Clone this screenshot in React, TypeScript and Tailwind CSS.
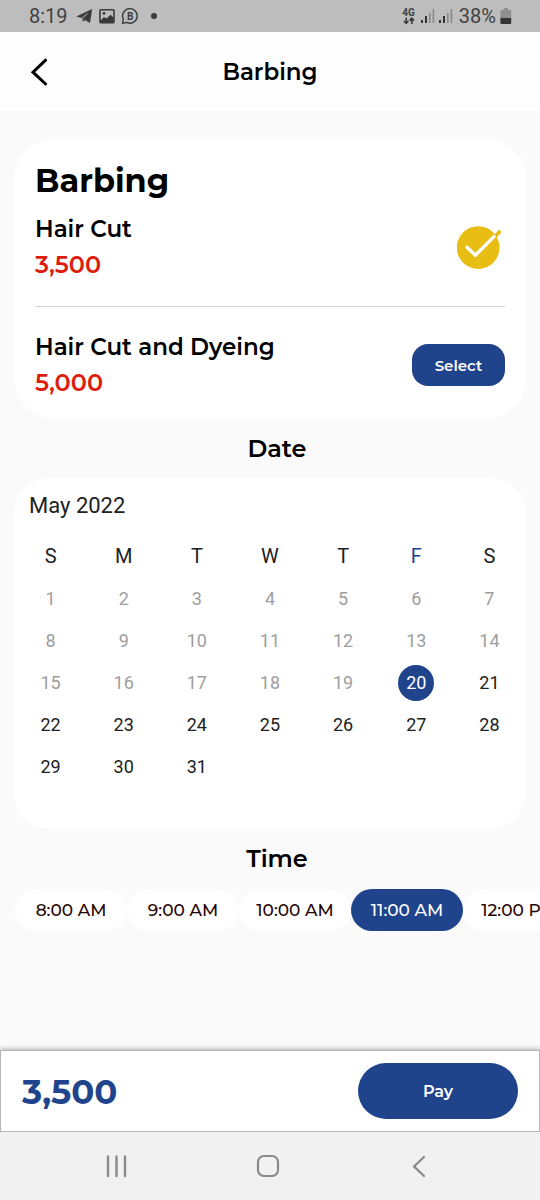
import React, { useState } from 'react';

const services = [
  { name: 'Hair Cut', price: '3,500' },
  { name: 'Hair Cut and Dyeing', price: '5,000' },
];

const weekdays = ['S', 'M', 'T', 'W', 'T', 'F', 'S'];

const weeks = [
  [1, 2, 3, 4, 5, 6, 7],
  [8, 9, 10, 11, 12, 13, 14],
  [15, 16, 17, 18, 19, 20, 21],
  [22, 23, 24, 25, 26, 27, 28],
  [29, 30, 31, null, null, null, null],
];

const TODAY = 20;

const times = ['8:00 AM', '9:00 AM', '10:00 AM', '11:00 AM', '12:00 PM'];

const SignalIcon: React.FC = () => (
  <svg width="14" height="16" viewBox="0 0 14 16" aria-hidden="true">
    <rect x="0" y="12" width="2" height="3" fill="#333" />
    <rect x="4" y="8" width="2" height="7" fill="#333" />
    <rect x="8" y="5" width="1.6" height="10" fill="#888" />
    <rect x="11.6" y="1" width="1.6" height="14" fill="#888" />
  </svg>
);

const StatusBar: React.FC = () => (
  <div className="flex h-8 shrink-0 items-center justify-between bg-[#bdbdbd] pr-7 pl-[29px] font-['Roboto',sans-serif] text-xl text-[#424242]">
    <div className="flex items-center gap-1.5">
      <span className="mr-0.5">8:19</span>
      <svg width="17" height="16" viewBox="0 0 17 16" aria-hidden="true">
        <path d="M0.2 8.4 16.2 1 14 15 9 12 7 13.8 6 10Z" fill="#3a3a3a" />
        <path d="M5.6 9.8 11.4 5.6 7.2 10.2 6.8 12" fill="none" stroke="#bdbdbd" strokeWidth="0.6" />
      </svg>
      <svg width="16" height="16" viewBox="0 0 16 16" aria-hidden="true">
        <rect x="1" y="1.8" width="14" height="13" rx="0.8" fill="none" stroke="#3a3a3a" strokeWidth="1.6" />
        <path d="M1.5 12.5 5 9 7.4 10.6 11.6 6.8 14.5 9.6V14.5H1.5Z" fill="#3a3a3a" />
        <circle cx="5" cy="5.4" r="1.4" fill="#3a3a3a" />
      </svg>
      <svg width="18" height="18" viewBox="0 0 18 18" aria-hidden="true">
        <path d="M1.6 16.4 2.4 12.2A7.3 7.3 0 1 1 5.6 15.4Z" fill="none" stroke="#3a3a3a" strokeWidth="1.4" strokeLinejoin="round" />
        <text x="9.2" y="12.6" fontSize="10" fontWeight="700" textAnchor="middle" fill="#3a3a3a">B</text>
      </svg>
      <span className="ml-1.5 size-[6px] rounded-full bg-[#3a3a3a]" />
    </div>
    <div className="flex items-center gap-1">
      <div className="mr-0.5 flex flex-col items-center">
        <span className="text-[10px] leading-[9px] font-bold">4G</span>
        <svg width="12" height="8" viewBox="0 0 12 8" aria-hidden="true">
          <path d="M3.2 0.8V6M1 4 3.2 6.4 5.4 4M8.8 7V1.6M6.6 3.6 8.8 1.2 11 3.6" fill="none" stroke="#3a3a3a" strokeWidth="1.6" />
        </svg>
      </div>
      <SignalIcon />
      <SignalIcon />
      <span className="ml-0.5">38%</span>
      <svg width="12" height="18" viewBox="0 0 12 18" aria-hidden="true">
        <path d="M3.6 1h4.4v2h2.2a1 1 0 0 1 1 1V11H0.4V4a1 1 0 0 1 1-1h2.2Z" fill="#8f8f8f" />
        <path d="M0.4 11h10.8v5a1 1 0 0 1-1 1H1.4a1 1 0 0 1-1-1Z" fill="#333" />
      </svg>
    </div>
  </div>
);

const CheckBadge: React.FC = () => (
  <svg width="48" height="48" viewBox="0 0 48 48" aria-hidden="true">
    <circle cx="21.2" cy="24.6" r="21.4" fill="#e8bd14" />
    <path d="M38 13.5 42.4 9" fill="none" stroke="#e8bd14" strokeWidth="3.6" strokeLinecap="round" />
    <path d="M10.2 24.4 18.4 32.2 37 13.6" fill="none" stroke="#fff" strokeWidth="3.4" strokeLinecap="round" strokeLinejoin="round" />
  </svg>
);

export default function App() {
  const [service, setService] = useState(0);
  const [day, setDay] = useState(TODAY);
  const [time, setTime] = useState('11:00 AM');

  return (
    <div className="flex min-h-screen flex-col bg-[#fafafa] font-['Montserrat','Inter',sans-serif] text-black">
      <StatusBar />

      {/* Header */}
      <header className="grid h-[79px] shrink-0 grid-cols-[1fr_auto_1fr] items-center bg-[#fefefe] px-7">
        <button type="button" aria-label="Back" className="w-6">
          <svg width="24" height="32" viewBox="0 0 24 32" aria-hidden="true">
            <path d="M17.6 4.2 5 16.2 17.6 28" fill="none" stroke="#000" strokeWidth="3" strokeLinecap="round" />
          </svg>
        </button>
        <h1 className="text-[23px] leading-9 font-semibold">Barbing</h1>
      </header>

      <main className="flex-1 pt-7">
        {/* Services */}
        <section className="mx-[14px] rounded-[40px] bg-white px-[21px] pt-5 pb-[18px]">
          <h2 className="mb-2 text-[32px] leading-[44px] font-bold">Barbing</h2>
          <ul className="divide-y divide-[#d4d4d4]">
            {services.map((item, i) => (
              <li key={item.name} className="flex items-center justify-between not-first:pt-[22px] not-last:pb-[23px]">
                <div>
                  <p className="text-[23px] leading-9 font-semibold">{item.name}</p>
                  <p className="text-2xl leading-9 font-semibold text-[#dd1c0c]">{item.price}</p>
                </div>
                {i === service ? (
                  <CheckBadge />
                ) : (
                  <button
                    type="button"
                    onClick={() => setService(i)}
                    className="h-[42px] w-[93px] rounded-2xl bg-[#1f448c] pt-0.5 text-[15px] font-semibold text-white"
                  >
                    Select
                  </button>
                )}
              </li>
            ))}
          </ul>
        </section>

        {/* Date */}
        <h2 className="pl-[14px] text-center text-2xl leading-[59px] font-semibold">Date</h2>
        <section className="mx-[14px] rounded-[36px] bg-white pb-[41px] font-['Roboto',sans-serif] text-[#212121]">
          <h3 className="px-[15px] text-[22px] leading-[56px]">May 2022</h3>
          <table className="w-full table-fixed text-center">
            <thead>
              <tr className="h-11 text-xl">
                {weekdays.map((name, i) => (
                  <th key={i} scope="col" className={i === 5 ? 'p-0 font-normal text-[#1f448c]' : 'p-0 font-normal'}>
                    {name}
                  </th>
                ))}
              </tr>
            </thead>
            <tbody>
              {weeks.map((week, w) => (
                <tr key={w} className="h-[42px] text-lg">
                  {week.map((date, i) => (
                    <td key={i} className="p-0">
                      {date && (
                        <button
                          type="button"
                          disabled={date < TODAY}
                          onClick={() => setDay(date)}
                          className={
                            date === day
                              ? 'size-9 rounded-full bg-[#1f448c] align-middle text-white'
                              : 'size-9 align-middle disabled:text-[#9e9e9e]'
                          }
                        >
                          {date}
                        </button>
                      )}
                    </td>
                  ))}
                </tr>
              ))}
            </tbody>
          </table>
        </section>

        {/* Time */}
        <h2 className="pl-[14px] text-center text-2xl leading-[60px] font-semibold">Time</h2>
        <div className="flex overflow-x-auto px-[15px] [scrollbar-width:none]">
          {times.map((slot) => (
            <button
              key={slot}
              type="button"
              onClick={() => setTime(slot)}
              className={
                slot === time
                  ? 'h-[42px] w-28 shrink-0 rounded-full bg-[#1f448c] pt-0.5 text-[17px] font-medium text-white'
                  : 'h-[42px] w-28 shrink-0 rounded-full bg-white pt-0.5 text-[17px] font-medium text-[#260505]'
              }
            >
              {slot}
            </button>
          ))}
        </div>
      </main>

      {/* Total */}
      <footer className="flex h-[82px] shrink-0 items-center justify-between border border-[#b5b5b5] bg-white px-[21px] shadow-[0_-1px_5px_rgba(0,0,0,0.3)]">
        <p className="pt-0.5 text-[34px] font-bold text-[#1f448c]">{services[service].price}</p>
        <button type="button" className="h-14 w-40 rounded-full bg-[#1f448c] pt-0.5 text-base font-semibold text-white">
          Pay
        </button>
      </footer>

      {/* System navigation */}
      <nav className="flex h-[68px] shrink-0 items-center justify-between bg-[#f1f1f1] pr-[109px] pl-[104px]">
        <button type="button" aria-label="Recent apps">
          <svg width="24" height="24" viewBox="0 0 24 24" aria-hidden="true">
            <path d="M4 2.5V22M12.5 2.5V22M21 2.5V22" fill="none" stroke="#8a8a8a" strokeWidth="2.4" strokeLinecap="round" />
          </svg>
        </button>
        <button type="button" aria-label="Home">
          <svg width="24" height="24" viewBox="0 0 24 24" aria-hidden="true">
            <rect x="2" y="2" width="20" height="20" rx="6" fill="none" stroke="#8a8a8a" strokeWidth="2.2" />
          </svg>
        </button>
        <button type="button" aria-label="Back">
          <svg width="24" height="24" viewBox="0 0 24 24" aria-hidden="true">
            <path d="M17 3 7 12.4 17 22" fill="none" stroke="#8a8a8a" strokeWidth="2.2" strokeLinecap="round" />
          </svg>
        </button>
      </nav>
    </div>
  );
}
